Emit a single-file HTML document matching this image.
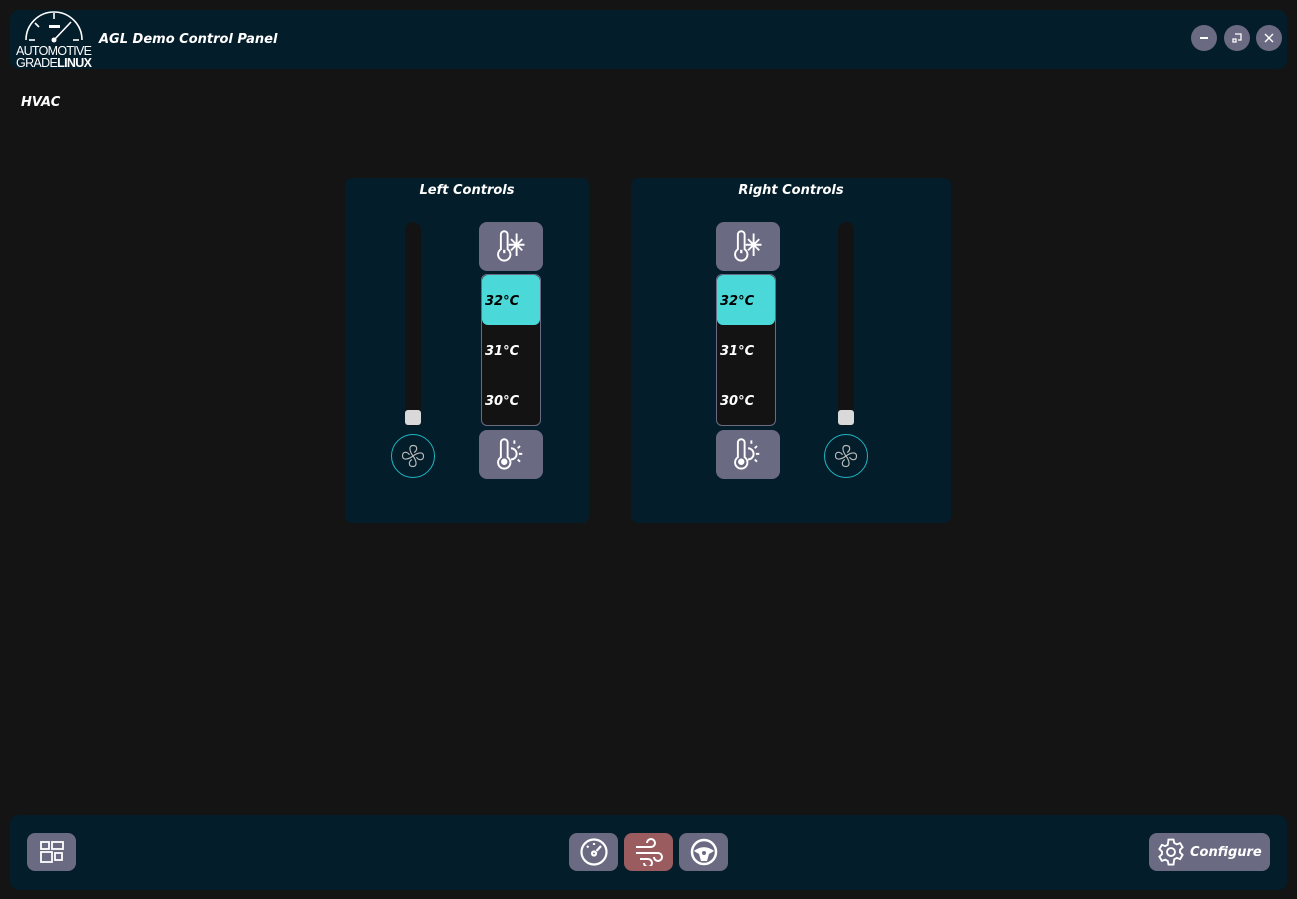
<!DOCTYPE html>
<html><head><meta charset="utf-8"><style>
*{margin:0;padding:0;box-sizing:border-box}
body{width:1297px;height:899px;background:#141414;position:relative;overflow:hidden;font-family:"Liberation Sans","DejaVu Sans",sans-serif;color:#fff}
.abs{position:absolute}
.bar{background:#041d2a;border-radius:9px}
.t{font-style:italic;font-weight:bold;font-family:"DejaVu Sans","Liberation Sans",sans-serif}
.btn{background:#6b6a83;border-radius:8px;display:flex;align-items:center;justify-content:center}
.wb{width:26px;height:26px;border-radius:50%;background:#6b6a83;display:flex;align-items:center;justify-content:center}
.track{background:#131313;border-radius:8px;width:16px}
.knob{background:#d9d9d9;border-radius:3px;width:16px;height:15px}
.list{background:#131313;border:1px solid #6b6a83;border-radius:6px;width:60px;height:152px}
.item{height:50px;display:flex;align-items:center;padding-left:3px;padding-top:2px;font-size:13px}
.sel{background:#4ad8d8;color:#000;border-radius:6px}
.fan{width:44px;height:44px;border-radius:50%;border:1.5px solid #1fb6c4;display:flex;align-items:center;justify-content:center}
</style></head><body>
<div class="abs bar" style="left:10px;top:10px;width:1277px;height:59px"></div>
<svg class="abs" style="left:14px;top:8px" width="80" height="60" viewBox="0 0 80 60">
<path d="M12 32 A28 28 0 0 1 68 32" fill="none" stroke="#fff" stroke-width="1.6"/>
<g stroke="#fff" stroke-width="1.6"><line x1="40" y1="5" x2="40" y2="11"/><line x1="21" y1="15" x2="25" y2="19"/><line x1="15" y1="32" x2="21" y2="32"/><line x1="59" y1="32" x2="65" y2="32"/><line x1="40" y1="32" x2="57" y2="14"/></g>
<rect x="35" y="17" width="11" height="3" fill="#fff"/><circle cx="40" cy="32" r="2.5" fill="#fff"/>
<text x="40" y="47" font-size="12.5" fill="#fff" text-anchor="middle" font-family="Liberation Sans" textLength="76">AUTOMOTIVE</text>
<text x="40" y="59" font-size="12.5" fill="#fff" text-anchor="middle" font-family="Liberation Sans" textLength="76">GRADE<tspan font-weight="bold">LINUX</tspan></text>
</svg>
<div class="abs t" style="left:99px;top:32px;font-size:13px">AGL Demo Control Panel</div>
<div class="abs wb" style="left:1191px;top:25px"><div style="width:8px;height:1.5px;background:#fff"></div></div>
<div class="abs wb" style="left:1224px;top:25px"><svg width="12" height="12"><path d="M4 2h6v6h-3M2 7h3v3h-3z" fill="none" stroke="#fff" stroke-width="1.3"/></svg></div>
<div class="abs wb" style="left:1256px;top:25px"><svg width="10" height="10"><path d="M1 1L9 9M9 1L1 9" stroke="#fff" stroke-width="1.4"/></svg></div>
<div class="abs t" style="left:21px;top:95px;font-size:13px">HVAC</div>

<div class="abs bar" style="left:345px;top:178px;width:244px;height:345px;border-radius:7px"></div>
<div class="abs t" style="left:345px;top:183px;width:244px;text-align:center;font-size:13px">Left Controls</div>
<div class="abs bar" style="left:631px;top:178px;width:320px;height:345px;border-radius:7px"></div>
<div class="abs t" style="left:631px;top:183px;width:320px;text-align:center;font-size:13px">Right Controls</div>

<!-- left -->
<div class="abs track" style="left:405px;top:222px;height:204px"></div>
<div class="abs knob" style="left:405px;top:410px"></div>
<div class="abs fan" style="left:391px;top:434px"><svg width="28" height="28" viewBox="0 0 24 24" fill="none" stroke="#bbb" stroke-width="1"><path d="M12 12C9 8 8 3 12 3s4 4 1 6M12 12c4-3 9-4 9 0s-4 4-6 1M12 12c3 4 4 9 0 9s-4-4-1-6M12 12c-4 3-9 4-9 0s4-4 6-1"/></svg></div>
<div class="abs btn" style="left:479px;top:222px;width:64px;height:49px"><svg width="34" height="36" viewBox="0 0 30 32" fill="none" stroke="#fff" stroke-width="1.7"><path d="M6 18V5a3 3 0 0 1 6 0v13a5.5 5.5 0 1 1-6 0z"/><path d="M8 20h2" stroke-width="3"/><path d="M20 4v20M15 9l10 10M25 9L15 19M13 14h14"/></svg></div>
<div class="abs list" style="left:481px;top:274px">
<div class="item sel t">32°C</div><div class="item t">31°C</div><div class="item t">30°C</div></div>
<div class="abs btn" style="left:479px;top:430px;width:64px;height:49px"><svg width="34" height="36" viewBox="0 0 30 32" fill="none" stroke="#fff" stroke-width="1.7"><path d="M6 18V5a3 3 0 0 1 6 0v13a5.5 5.5 0 1 1-6 0z"/><circle cx="9" cy="22" r="2" fill="#fff"/><path d="M15 10a5 5 0 0 1 0 10M18 3v3M23 8l-2 2M25 15h-3M23 22l-2-2"/></svg></div>

<!-- right -->
<div class="abs btn" style="left:716px;top:222px;width:64px;height:49px"><svg width="34" height="36" viewBox="0 0 30 32" fill="none" stroke="#fff" stroke-width="1.7"><path d="M6 18V5a3 3 0 0 1 6 0v13a5.5 5.5 0 1 1-6 0z"/><path d="M8 20h2" stroke-width="3"/><path d="M20 4v20M15 9l10 10M25 9L15 19M13 14h14"/></svg></div>
<div class="abs list" style="left:716px;top:274px">
<div class="item sel t">32°C</div><div class="item t">31°C</div><div class="item t">30°C</div></div>
<div class="abs btn" style="left:716px;top:430px;width:64px;height:49px"><svg width="34" height="36" viewBox="0 0 30 32" fill="none" stroke="#fff" stroke-width="1.7"><path d="M6 18V5a3 3 0 0 1 6 0v13a5.5 5.5 0 1 1-6 0z"/><circle cx="9" cy="22" r="2" fill="#fff"/><path d="M15 10a5 5 0 0 1 0 10M18 3v3M23 8l-2 2M25 15h-3M23 22l-2-2"/></svg></div>
<div class="abs track" style="left:838px;top:222px;height:204px"></div>
<div class="abs knob" style="left:838px;top:410px"></div>
<div class="abs fan" style="left:824px;top:434px"><svg width="28" height="28" viewBox="0 0 24 24" fill="none" stroke="#bbb" stroke-width="1"><path d="M12 12C9 8 8 3 12 3s4 4 1 6M12 12c4-3 9-4 9 0s-4 4-6 1M12 12c3 4 4 9 0 9s-4-4-1-6M12 12c-4 3-9 4-9 0s4-4 6-1"/></svg></div>

<!-- bottom -->
<div class="abs bar" style="left:10px;top:815px;width:1277px;height:75px"></div>
<div class="abs btn" style="left:27px;top:833px;width:49px;height:38px"><svg width="26" height="24" fill="none" stroke="#fff" stroke-width="1.8"><rect x="2" y="2" width="8" height="7"/><rect x="13" y="2" width="11" height="7"/><rect x="2" y="12" width="11" height="10"/><rect x="16" y="13" width="7" height="7"/></svg></div>
<div class="abs btn" style="left:569px;top:833px;width:49px;height:38px"><svg width="30" height="30" fill="none" stroke="#fff" stroke-width="2.2"><circle cx="15" cy="15" r="12.5"/><path d="M15 6v2M8 9l1.5 1.5M22 9l-4.5 5"/><circle cx="15" cy="16.5" r="2"/></svg></div>
<div class="abs btn" style="left:624px;top:833px;width:49px;height:38px;background:#9a5c5e"><svg width="30" height="28" fill="none" stroke="#fff" stroke-width="2"><path d="M2 9h15a4 4 0 1 0-4-4M2 15h22a4 4 0 1 1-4 4M6 21h8a4 4 0 1 1-4 4"/></svg></div>
<div class="abs btn" style="left:679px;top:833px;width:49px;height:38px"><svg width="30" height="30"><circle cx="15" cy="15" r="12" fill="none" stroke="#fff" stroke-width="2.5"/><path d="M5 14c6-5 14-5 20 0l-5 3-2 7h-6l-2-7z" fill="#fff"/><circle cx="15" cy="16" r="2" fill="#6b6a83"/></svg></div>
<div class="abs btn" style="left:1149px;top:833px;width:121px;height:38px;justify-content:flex-start;padding-left:7px"><svg width="30" height="30" viewBox="0 0 24 24" fill="none" stroke="#fff" stroke-width="1.5"><circle cx="12" cy="12" r="3.2"/><path d="M10 2h4l.6 2.8 2 1.1 2.7-1 2 3.4-2.1 1.9v2.2l2.1 1.9-2 3.4-2.7-1-2 1.1L14 22h-4l-.6-2.8-2-1.1-2.7 1-2-3.4 2.1-1.9v-2.2L2.7 9.7l2-3.4 2.7 1 2-1.1z"/></svg><span class="t" style="font-size:13px;margin-left:4px;margin-top:1px">Configure</span></div>
</body></html>
